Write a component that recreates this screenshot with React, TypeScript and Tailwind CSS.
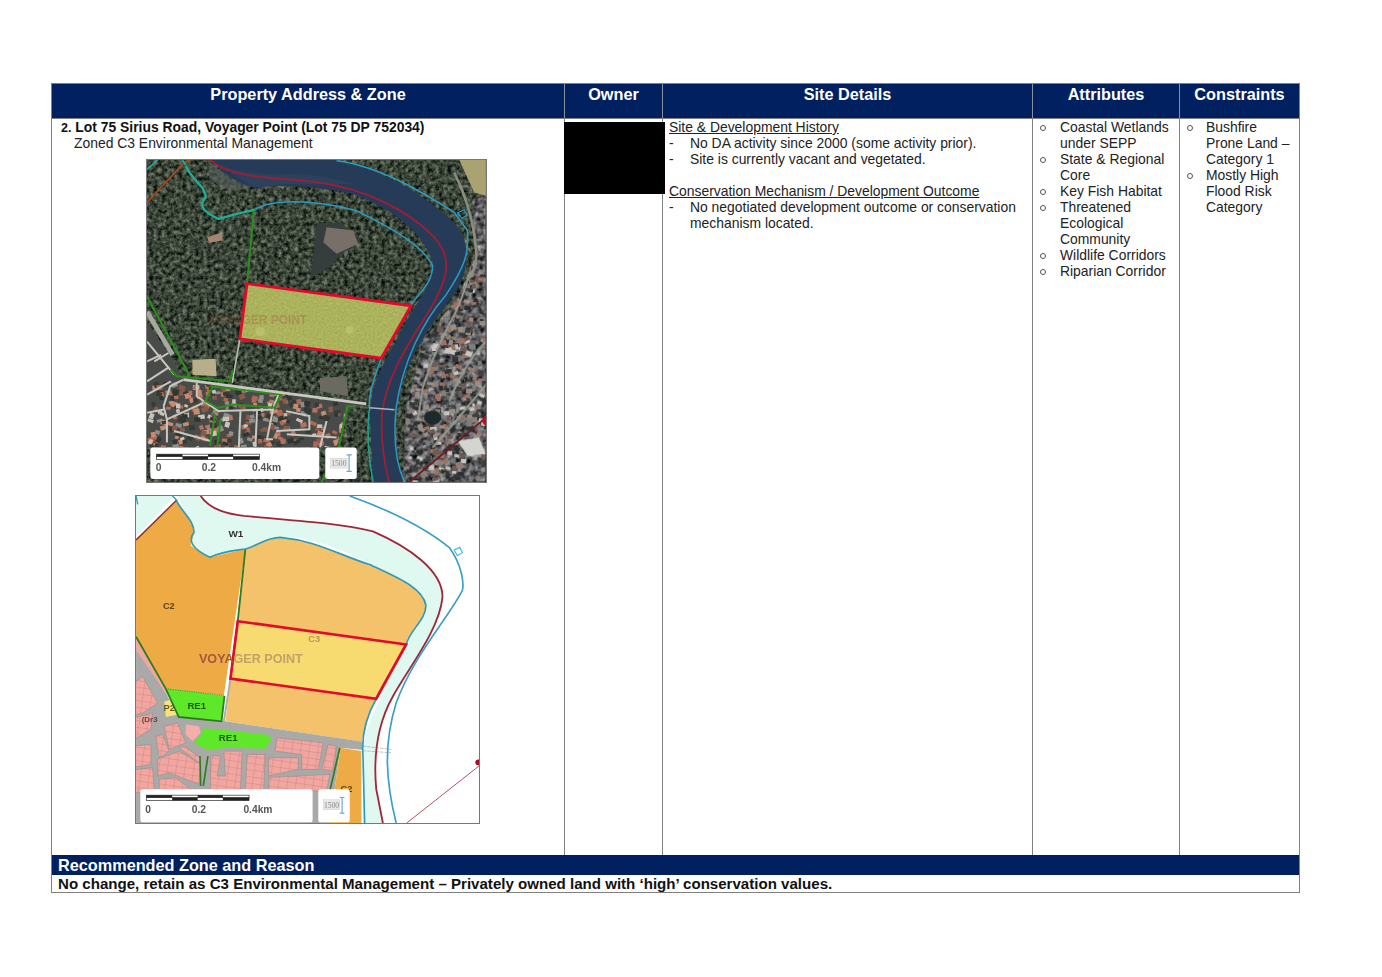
import React from "react";

function rnd(seed: number) {
  let s = seed;
  return () => {
    s = (s * 16807) % 2147483647;
    return s / 2147483647;
  };
}

const Scale = ({ y, x }: { y: number; x: number }) => (
  <g>
    <rect x={x} y={y} width="310" height="7" fill="#fff" stroke="#222" strokeWidth="2" />
    <rect x={x} y={y + 7} width="310" height="9" fill="#fff" stroke="#222" strokeWidth="2" />
    <rect x={x} y={y} width="78" height="7" fill="#222" />
    <rect x={x + 78} y={y + 8} width="77" height="8" fill="#222" />
    <rect x={x + 155} y={y} width="76" height="7" fill="#222" />
    <rect x={x + 231} y={y + 8} width="79" height="8" fill="#222" />
  </g>
);

function Roofs({ area, seed, n, cols }: { area: number[]; seed: number; n: number; cols: string[] }) {
  const r = rnd(seed);
  const out: React.ReactElement[] = [];
  for (let i = 0; i < n; i++) {
    const x = area[0] + r() * (area[2] - area[0]);
    const y = area[1] + r() * (area[3] - area[1]);
    const c = cols[Math.floor(r() * cols.length)];
    out.push(<rect key={i} x={x} y={y} width={10 + r() * 10} height={8 + r() * 9} fill={c} transform={`rotate(${r() * 50 - 25} ${x} ${y})`} />);
  }
  return <g>{out}</g>;
}

const urbanCols = ["#8d7f78", "#a3705f", "#7b7d7c", "#c7c5c0", "#6f5a52", "#2e3532", "#3a403c", "#9a8d84", "#2a2f2e"];
const suburbCols = ["#b5735f", "#c98a72", "#8f8f8a", "#c7c3ba", "#8a5a4c", "#2e3430", "#343a36", "#b0684f"];

function MapSatellite() {
  return (
    <svg viewBox="18 12 1023 972" className="block w-[341px] h-[324px] ml-[94px] mt-[8px] border border-[#777] box-border blur-[0.4px]">
      <defs>
        <filter id="forest" x="0" y="0" width="100%" height="100%" colorInterpolationFilters="sRGB">
          <feTurbulence type="fractalNoise" baseFrequency="0.08" numOctaves="3" seed="4" />
          <feColorMatrix type="matrix" values="0.7 0 0 0 -0.12  0.72 0 0 0 -0.09  0.62 0 0 0 -0.09  0 0 0 0 1" />
          <feGaussianBlur stdDeviation="1.8" />
        </filter>
        <filter id="urban" x="0" y="0" width="100%" height="100%" colorInterpolationFilters="sRGB">
          <feTurbulence type="fractalNoise" baseFrequency="0.06" numOctaves="2" seed="9" />
          <feColorMatrix type="matrix" values="1.0 0 0 0 -0.14  1.0 0 0 0 -0.14  1.0 0 0 0 -0.13  0 0 0 0 1" />
        </filter>
        <filter id="meadow" x="0" y="0" width="100%" height="100%" colorInterpolationFilters="sRGB">
          <feTurbulence type="fractalNoise" baseFrequency="0.16" numOctaves="2" seed="2" />
          <feColorMatrix type="matrix" values="0.14 0 0 0 0.6  0.14 0 0 0 0.63  0.12 0 0 0 0.3  0 0 0 0 1" />
        </filter>
        <filter id="soft" x="-5%" y="-5%" width="110%" height="110%">
          <feGaussianBlur stdDeviation="2.2" />
        </filter>
        <clipPath id="urbanR">
          <path d="M1041 100 L1000 130 L1010 300 L960 420 L850 560 L800 760 L790 984 L1041 984 Z" />
        </clipPath>
        <clipPath id="urbanL">
          <path d="M18 500 L100 620 L130 680 L680 750 L620 770 L590 880 L18 880 Z" />
        </clipPath>
        <clipPath id="plot">
          <path d="M320 385 L815 452 L725 610 L298 552 Z" />
        </clipPath>
        <clipPath id="frame1">
          <rect x="18" y="12" width="1023" height="972" />
        </clipPath>
      </defs>
      <g clipPath="url(#frame1)">
        <rect x="18" y="12" width="1023" height="972" filter="url(#forest)" />
        <g clipPath="url(#urbanR)">
          <g filter="url(#soft)">
            <rect x="18" y="12" width="1023" height="972" filter="url(#urban)" />
            <Roofs area={[790, 330, 1041, 984]} seed={71} n={420} cols={urbanCols} />
            <path d="M1005 200 Q1010 340 950 470 Q880 600 850 700 L835 800 M1041 690 L950 800 L880 880 M1041 560 Q980 620 930 740" stroke="#979a92" strokeWidth="6" fill="none" />
            <ellipse cx="880" cy="790" rx="26" ry="22" fill="#1f2a2a" />
            <path d="M955 860 L1020 850 L1041 900 L985 905 Z" fill="#d4d4d0" />
          </g>
        </g>
        <path d="M960 12 L1041 12 L1041 120 L1005 110 Z" fill="#a9a271" filter="url(#soft)" />
        <path d="M945 50 Q1005 170 1012 300 Q1010 340 990 370" stroke="#8e8f84" strokeWidth="8" fill="none" filter="url(#soft)" />
        <g clipPath="url(#urbanL)">
          <g filter="url(#soft)">
            <rect x="18" y="12" width="1023" height="972" fill="#484c49" />
            <Roofs area={[18, 680, 620, 880]} seed={37} n={330} cols={suburbCols} />
            <path d="M18 560 L100 660 M40 620 L90 590 M18 680 L80 640 M18 620 L60 600 M18 720 L90 680 M68 755 L88 695 L128 675 M168 685 L168 725 L233 770 L398 765 L418 710 M398 765 L380 855 L398 855 M438 770 L508 785 L508 825 L408 830 M78 795 L188 745 M18 775 L68 765 M78 795 L78 865 M68 755 L78 795 M300 770 L295 880 M350 770 L345 880 M100 830 L210 860 M560 800 L540 880 M440 840 L590 850" stroke="#c8c8c0" strokeWidth="6" fill="none" />
          </g>
        </g>
        <path d="M530 205 L600 200 L665 250 L600 300 L560 340 L510 370 L520 310 Z" fill="#363d3e" filter="url(#soft)" />
        <path d="M560 215 L640 225 L655 265 L590 295 L550 260 Z" fill="#786f68" filter="url(#soft)" />
        <path d="M155 615 L225 612 L228 665 L155 660 Z" fill="#b8ae8a" filter="url(#soft)" />
        <path d="M200 245 L245 230 L245 255 L205 262 Z" fill="#a68470" filter="url(#soft)" />
        <path d="M540 670 L620 665 L625 725 L540 710 Z" fill="#6a6a60" filter="url(#soft)" />
        <path d="M18 470 L95 600" stroke="#a7a9a0" strokeWidth="14" filter="url(#soft)" />
        <path d="M205 12 C240 60 300 70 340 90 C300 110 240 110 205 60 Z" fill="#59605e" opacity="0.6" />
        <path d="M215 12 C250 60 300 85 340 95 C420 85 540 90 640 115 C760 160 860 240 880 320 C880 400 820 450 770 560 C720 640 695 700 690 770 L700 984 L790 984 C765 880 760 790 790 680 C820 590 880 500 950 410 C990 350 990 280 965 225 C900 150 780 60 600 12 Z" fill="#263a58" filter="url(#soft)" />
        <path d="M215 12 C250 40 330 55 420 55 C500 50 600 70 640 85 L440 85 L340 95 Z" fill="#34485f" opacity="0.5" />
        <path d="M210 12 C270 70 420 65 520 78 C680 95 810 170 880 240 C940 300 930 360 880 450 C820 550 745 650 728 770 C722 850 735 930 748 984" fill="none" stroke="#a31c35" strokeWidth="5.5" />
        <path d="M590 14 C720 30 850 110 945 170 L985 225 C990 290 980 330 920 420 C850 500 790 620 770 760 C760 860 770 930 795 984" fill="none" stroke="#2a9cc4" strokeWidth="4.5" />
        <path d="M955 172 L975 162 L985 178 L968 188 Z" fill="none" stroke="#2a9cc4" strokeWidth="3.5" />
        <path d="M345 160 C400 130 520 130 650 165 C760 220 850 270 880 330 C880 390 830 420 815 450 M725 610 C700 680 685 720 690 770" fill="none" stroke="#2a9cc4" strokeWidth="4.5" />
        <path d="M688 770 C680 850 690 930 700 984" fill="none" stroke="#1d9f8a" strokeWidth="5" />
        <path d="M135 30 C150 70 195 90 195 125 C170 150 190 170 235 190 C280 175 310 170 345 162" fill="none" stroke="#1fae97" strokeWidth="7" />
        <path d="M18 140 L130 20 L148 12" fill="none" stroke="#a8491e" strokeWidth="5" />
        <path d="M18 40 L50 12 M125 12 L135 28" stroke="#1fae97" strokeWidth="5" />
        <path d="M340 165 L320 385 L298 552" fill="none" stroke="#2c8f1c" strokeWidth="6" />
        <path d="M298 552 L275 685" fill="none" stroke="#bdbdb5" strokeWidth="5" />
        <path d="M18 425 L145 660 M88 645 L108 665 L268 680 L278 645" fill="none" stroke="#2c8f1c" strokeWidth="6" />
        <path d="M218 695 L193 740 L233 760 L278 750 L403 760 L423 720 L208 695 M223 780 L208 875 M240 795 L230 875 M648 755 L623 755 L598 875 L545 984" fill="none" stroke="#2c8f1c" strokeWidth="6" />
        <path d="M128 675 L680 748" stroke="#c9c9c2" strokeWidth="8" />
        <path d="M690 760 L765 766" stroke="#aeb4b5" strokeWidth="5" />
        <rect x="18" y="12" width="1023" height="972" filter="url(#meadow)" clipPath="url(#plot)" />
        <circle cx="630" cy="525" r="12" fill="#c8c97a" opacity="0.6" filter="url(#soft)" />
        <circle cx="360" cy="530" r="14" fill="#c8c97a" opacity="0.6" filter="url(#soft)" />
        <text x="205" y="507" fontFamily="Liberation Sans, sans-serif" fontWeight="700" fontSize="36" fill="#a5563c" opacity="0.35">VOYAGER POINT</text>
        <path d="M320 385 L815 452 L725 610 L298 552 Z" fill="none" stroke="#e6072d" strokeWidth="8.5" />
        <path d="M810 984 L1041 790" stroke="#6e1a22" strokeWidth="5" />
        <path d="M1026 798 L1041 782 L1041 818 Z" fill="#c01020" />
        <rect x="28" y="880" width="510" height="95" rx="8" fill="#fff" />
        <rect x="556" y="880" width="95" height="95" rx="8" fill="#fff" />
        <Scale x={47} y={900} />
        <g fontFamily="Liberation Sans, sans-serif" fontWeight="700" fontSize="31" fill="#555">
          <text x="44" y="951">0</text>
          <text x="183" y="951">0.2</text>
          <text x="335" y="951">0.4km</text>
        </g>
        <rect x="572" y="912" width="50" height="30" fill="#e8e8e8" stroke="#bbb" />
        <text x="574" y="937" fontFamily="Liberation Serif, serif" fontSize="26" fill="#888" textLength="46" lengthAdjust="spacingAndGlyphs">1500</text>
        <path d="M628 902 L628 952 M620 902 L636 902 M620 952 L636 952" stroke="#67a9d6" strokeWidth="3.5" fill="none" />
      </g>
    </svg>
  );
}

const blocks: string[] = [
  "-15,15 20,-10 65,70 20,100 -15,110",
  "-15,118 50,100 45,150 -15,185",
  "85,140 125,130 150,190 100,210",
  "60,170 80,165 100,215 70,235",
  "65,240 130,215 195,255 190,315 100,280 65,290",
  "145,200 200,240 190,250 130,205",
  "-15,200 45,195 45,255 -15,265",
  "-15,272 50,265 55,340 -15,340",
  "225,230 255,230 245,290 270,290 265,215 320,215 315,335 225,335",
  "335,225 390,225 385,335 330,335",
  "400,235 490,235 490,270 400,290",
  "425,175 565,190 550,270 500,270 500,225 420,215",
  "580,195 605,200 595,275 560,270",
  "400,295 585,285 575,335 400,335",
  "70,300 120,295 170,335 70,335",
];

function MapZoning() {
  return (
    <svg viewBox="15 15 1035 987" className="block w-[345px] h-[329px] ml-[83px] mt-[12px] border border-[#777] box-border bg-white blur-[0.4px]">
      <defs>
        <pattern id="lots" width="26" height="20" patternUnits="userSpaceOnUse" patternTransform="rotate(8)">
          <rect width="26" height="20" fill="#f3a5a0" />
          <path d="M0 0 H26 M0 0 V20" stroke="#a87c7a" strokeWidth="1.8" />
        </pattern>
        <clipPath id="frame2">
          <rect x="15" y="15" width="1035" height="987" />
        </clipPath>
      </defs>
      <g clipPath="url(#frame2)">
        <rect x="15" y="15" width="1035" height="987" fill="#fff" />
        <path d="M15 15 L130 15 L15 140 Z" fill="#dff8f0" />
        <path d="M140 15 L215 15 C250 60 300 70 340 75 C470 88 620 95 730 122 C840 170 940 240 940 320 C930 420 840 530 790 620 C745 700 730 790 740 900 L760 1002 L700 1002 L700 780 C705 710 760 610 830 465 C860 410 890 380 890 345 C880 300 820 270 720 220 C640 175 520 130 440 140 C400 150 370 170 345 175 L240 200 L180 170 L190 120 Z" fill="#dff8f0" />
        <path d="M15 145 L137 30 C160 70 190 90 190 125 L180 165 L238 200 L345 175 L280 617 L105 597 L15 440 Z" fill="#edaa45" />
        <path d="M345 175 C380 165 410 140 450 140 C560 150 620 190 720 222 C800 260 880 290 890 345 C890 390 840 420 830 465 L740 627 C720 660 705 700 697 757 L285 695 Z" fill="#f5c26c" />
        <path d="M322 393 L830 463 L740 627 L300 566 Z" fill="#f7da70" />
        <path d="M15 470 L105 610 L145 682 L285 695 L700 757 L700 782 L632 775 L600 1002 L15 1002 Z" fill="#a9a9a7" />
        <path d="M15 440 L105 597 L115 625 L15 480 Z" fill="#f3a5a0" />
        <g transform="translate(15 570)">
          {blocks.map((p) => (
            <polygon key={p} points={p} fill="url(#lots)" stroke="#8f8785" strokeWidth="1.5" />
          ))}
          <polygon points="150,135 190,140 195,160 170,185 150,165" fill="#f6aeaa" />
        </g>
        <path d="M105 595 L282 618 L273 695 L145 682 Z" fill="#5fe82a" />
        <path d="M220 715 L410 735 L425 750 L405 778 L285 775 L230 782 L190 760 L210 735 Z" fill="#5fe82a" />
        <path d="M100 635 L120 630 L140 675 L105 682 Z" fill="#f7e37e" />
        <path d="M632 775 L695 785 L695 1002 L600 1002 Z" fill="#edaa45" />
        <path d="M345 175 L322 393 L300 566" fill="none" stroke="#2c7d22" strokeWidth="5.5" />
        <path d="M300 566 L280 695" stroke="#a9a9a7" strokeWidth="5.5" />
        <path d="M15 440 L105 597 L145 685 M145 682 L273 695 L282 618" stroke="#2c7d22" strokeWidth="5.5" fill="none" />
        <path d="M105 597 L280 617" stroke="#2c7d22" strokeWidth="2" strokeDasharray="4 3" />
        <path d="M630 775 L600 905 M232 800 L218 890 M208 800 L210 890" stroke="#2c7d22" strokeWidth="5" fill="none" />
        <path d="M700 770 L785 780 M700 784 L785 790" stroke="#b5b5b5" strokeWidth="2.5" strokeDasharray="10 3" />
        <path d="M15 148 L137 28" stroke="#8c2f2f" strokeWidth="4.5" />
        <path d="M210 15 C240 60 300 70 340 75 C470 88 620 95 730 122 C840 170 940 240 940 320 C930 420 840 530 790 620 C745 700 730 790 740 900 L760 1002" fill="none" stroke="#a0263a" strokeWidth="5.5" />
        <path d="M137 30 C160 70 190 90 190 125 C170 150 185 175 238 200 C280 180 310 180 345 175 C380 165 410 140 450 140 C560 150 620 190 720 222 C800 260 880 290 890 345 C890 390 840 420 830 465 C790 540 760 580 740 627 C710 680 695 740 700 800 L705 1002" fill="none" stroke="#2e9ab8" strokeWidth="5" />
        <path d="M660 15 C730 40 860 90 960 170 C1000 225 1005 280 1000 300 C960 380 850 500 800 640 C760 770 770 880 800 1002" fill="none" stroke="#3a9ec6" strokeWidth="5" />
        <path d="M975 178 L992 170 L1000 186 L985 195 Z" fill="#fff" stroke="#38c0e0" strokeWidth="3.5" />
        <path d="M15 15 L20 40 M125 15 L140 30" stroke="#2e9ab8" strokeWidth="4" />
        <path d="M322 393 L830 463 L740 627 L300 566 Z" fill="none" stroke="#e30a2c" strokeWidth="8" />
        <path d="M832 1002 L1050 830" stroke="#b0525c" strokeWidth="3" />
        <circle cx="1048" cy="819" r="9" fill="#a50f22" />
        <g fontFamily="Liberation Sans, sans-serif" fontWeight="700" fill="#333">
          <text x="294" y="138" fontSize="30">W1</text>
          <text x="96" y="356" fontSize="28" fill="#5d4310">C2</text>
          <text x="535" y="456" fontSize="28" fill="#b59a58">C3</text>
          <text x="205" y="520" fontSize="38">
            <tspan fill="#a3583a">VOYA</tspan>
            <tspan fill="#c0a26a">GER POINT</tspan>
          </text>
          <text x="170" y="657" fontSize="29" fill="#1f5a18">RE1</text>
          <text x="265" y="755" fontSize="29" fill="#1f5a18">RE1</text>
          <text x="98" y="664" fontSize="28" fill="#5d5d20">P2</text>
          <text x="32" y="698" fontSize="24" fill="#6a4444">(Dr3</text>
          <text x="632" y="908" fontSize="28" fill="#5d4310">C2</text>
        </g>
        <rect x="28" y="900" width="520" height="100" rx="8" fill="#fff" />
        <rect x="565" y="900" width="95" height="100" rx="8" fill="#fff" />
        <Scale x={46} y={918} />
        <g fontFamily="Liberation Sans, sans-serif" fontWeight="700" fontSize="31" fill="#555">
          <text x="43" y="971">0</text>
          <text x="183" y="971">0.2</text>
          <text x="339" y="971">0.4km</text>
        </g>
        <rect x="580" y="932" width="50" height="30" fill="#e8e8e8" stroke="#bbb" />
        <text x="582" y="957" fontFamily="Liberation Serif, serif" fontSize="26" fill="#888" textLength="46" lengthAdjust="spacingAndGlyphs">1500</text>
        <path d="M637 925 L637 972 M630 925 L644 925 M630 972 L644 972" stroke="#67a9d6" strokeWidth="3.5" fill="none" />
      </g>
    </svg>
  );
}

const Bullets = ({ items, dash, narrow }: { items: string[]; dash?: boolean; narrow?: boolean }) => (
  <ul>
    {items.map((t) => (
      <li key={t} className="flex">
        {dash ? (
          <span className="w-[21px] shrink-0">-</span>
        ) : (
          <span className={narrow ? "w-[19px] shrink-0 pt-[6px]" : "w-[20px] shrink-0 pt-[6px]"}>
            <span className="block w-[6px] h-[6px] rounded-full border border-[#555]" />
          </span>
        )}
        <span>{t}</span>
      </li>
    ))}
  </ul>
);

const Head = ({ children, className }: { children: React.ReactNode; className: string }) => (
  <div className={`text-center text-[16.25px] leading-[20px] font-bold text-white bg-[#002060] border-r border-[#8a8f9c] ${className}`}>
    {children}
  </div>
);

export default function App() {
  return (
    <div className="w-[1382px] h-[977px] bg-white pt-[83px] pl-[51px] text-[13.9px] leading-[16px] text-[#222] [font-family:'Liberation_Sans',Arial,sans-serif] overflow-hidden">
      <div className="w-[1249px] h-[810px] border border-[#808080] box-border flex flex-col">
        <div className="flex h-[35px] shrink-0 border-b border-[#808080] bg-[#002060]">
          <Head className="w-[513px]">Property Address &amp; Zone</Head>
          <Head className="w-[98px]">Owner</Head>
          <Head className="w-[370px]">Site Details</Head>
          <Head className="w-[147px]">Attributes</Head>
          <Head className="flex-1 border-r-0">Constraints</Head>
        </div>
        <div className="flex h-[736px] shrink-0">
          <div className="w-[513px] border-r border-[#808080]">
            <div className="pl-[9px] h-[16px] font-bold text-[#111]">
              <span className="text-[12.5px] leading-none">2.</span> Lot 75 Sirius Road, Voyager Point (Lot 75 DP 752034)
            </div>
            <div className="pl-[22px]">Zoned C3 Environmental Management</div>
            <MapSatellite />
            <MapZoning />
          </div>
          <div className="relative w-[98px] border-r border-[#808080]">
            <div className="absolute left-[-1px] top-[3px] w-[101px] h-[72px] bg-black" />
          </div>
          <div className="w-[370px] border-r border-[#808080] pl-[6px] pr-[8px]">
            <div className="underline">Site &amp; Development History</div>
            <Bullets dash items={["No DA activity since 2000 (some activity prior).", "Site is currently vacant and vegetated."]} />
            <div className="underline mt-[16px]">Conservation Mechanism / Development Outcome</div>
            <Bullets dash items={["No negotiated development outcome or conservation mechanism located."]} />
          </div>
          <div className="w-[147px] border-r border-[#808080] pl-[7px] pr-[2px]">
            <Bullets items={["Coastal Wetlands under SEPP", "State & Regional Core", "Key Fish Habitat", "Threatened Ecological Community", "Wildlife Corridors", "Riparian Corridor"]} />
          </div>
          <div className="flex-1 pl-[7px] pr-[4px]">
            <Bullets narrow items={["Bushfire Prone Land – Category 1", "Mostly High Flood Risk Category"]} />
          </div>
        </div>
        <div className="h-[20px] shrink-0 bg-[#002060] text-white font-bold text-[16.25px] leading-[21px] pl-[6px]">Recommended Zone and Reason</div>
        <div className="pl-[6px] font-bold text-[#111] leading-[18px] text-[15.09px]">No change, retain as C3 Environmental Management – Privately owned land with ‘high’ conservation values.</div>
      </div>
    </div>
  );
}
